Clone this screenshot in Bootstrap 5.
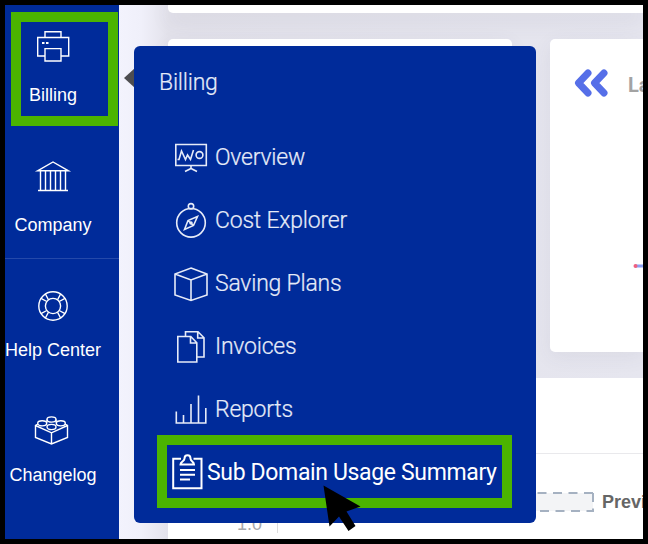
<!DOCTYPE html>
<html lang="en">
<head>
<meta charset="utf-8">
<meta name="viewport" content="width=device-width, initial-scale=1">
<title>Billing</title>
<link href="https://cdn.jsdelivr.net/npm/bootstrap@5.3.0/dist/css/bootstrap.min.css" rel="stylesheet">
<style>
body{margin:0;background:#000;overflow:hidden}
.shell{width:648px;height:544px;border:5px solid #000;background:#f1f1fb}
svg{display:block;flex:none;fill:none;stroke:#fff;stroke-width:1.4;overflow:visible}
.side{width:114px;background:#002b9a;flex:none;font:18px/27px "Liberation Sans",Arial,sans-serif;color:#fff}
.side-item{width:96px;height:130px;padding-top:25px;white-space:nowrap}
.side-item svg{margin-bottom:18px}
.side-low{height:125px;padding-top:0}
.side-low svg{margin-bottom:14px}
.side-rule{height:1px;margin-bottom:30px;background:#2449aa;margin-top:-7px}
.page{min-width:0;padding-left:49px;background:linear-gradient(90deg,#f3f3fd 0,#f0f0fa 22px,#e3e2eb 49px,#e6e6ef 100%)}
.panel{background:#fff;flex:none}
.panel-top{height:8px;border-bottom-left-radius:5px;margin-bottom:26px;box-shadow:0 6px 22px rgba(70,70,95,.14)}
.panel-left{width:344px;height:313px;border-radius:5px;box-shadow:0 5px 20px rgba(70,70,95,.07)}
.panel-right{width:93px;height:313px;border-radius:5px 0 0 5px;padding:27px 0 0 23px;box-shadow:0 5px 20px rgba(70,70,95,.07)}
.metric{font:bold 20px/24px Roboto,sans-serif;color:#a3a3a3;margin:3px 0 0 18px}
.trend{margin:153px 0 0 60px}
.panel-bottom{margin-top:26px;height:161px}
.panel-head{height:76px;border-bottom:1px solid #e9e9ec}
.legend-row{padding:38px 0 0 365px;font:bold 18px/20px "Liberation Sans",Arial,sans-serif;color:#666}
.axis-row{padding-left:69px;margin-top:2px;font:18px/20px "Liberation Sans",Arial,sans-serif;color:#a7a8ac}
.axis-line{width:1px;height:18px;background:#ddd;margin-left:15px}
.flyout{left:134px;top:46px;width:402px;height:477px;border-radius:6px;background:#002b9a;color:#e6ebf8;font:300 23px/30px Roboto,sans-serif;letter-spacing:-.22px;-webkit-text-stroke:.2px currentColor}
.flyout-title{padding:22px 0 0 25px;height:80px}
.entry{height:63px;padding-left:40px;white-space:nowrap}
.entry svg{margin-right:7px;stroke:#e6ebf8;stroke-width:1.6}
.entry-on{height:73px;width:355px;margin:-6px 0 0 23px;border:10px solid #4bb400;padding:2px 0 0 4px;color:#fff;font-weight:400;letter-spacing:-.35px;-webkit-text-stroke:0}
.entry-on svg{margin-right:2px;stroke:#fff;stroke-width:2}
.pointer{left:124px;top:68px;stroke:none;fill:#4d4d50}
.ring{left:11px;top:12px;width:107px;height:114px;border:10px solid #4bb400}
.cursor{left:320px;top:482px;stroke:none;fill:#000}
</style>
<script src="https://cdn.jsdelivr.net/npm/bootstrap@5.3.0/dist/js/bootstrap.bundle.min.js"></script>
</head>
<body>
<div class="shell d-flex overflow-hidden position-relative">
  <nav class="side d-flex flex-column">
    <div class="side-item d-flex flex-column align-items-center">
      <svg width="34" height="34" viewBox="0 0 34 34"><path d="M9 7.500V1.700h16V7.500M9 26H1.700V7.500h31V26H25M9 18.600h16V31H9z"/><path d="M6 13h2.500M10 13h2.500" stroke-width="2"/></svg>
      <span>Billing</span>
    </div>
    <div class="side-item d-flex flex-column align-items-center">
      <svg width="34" height="34" viewBox="0 0 34 34"><path d="M1.500 10.800 17 2l15.500 8.800zM2 30.500h30M4.500 11v19M9.500 11v19M14.500 11v19M19.500 11v19M24.500 11v19M29.500 11v19"/></svg>
      <span>Company</span>
    </div>
    <div class="side-rule"></div>
    <div class="side-item side-low d-flex flex-column align-items-center">
      <svg width="34" height="34" viewBox="0 0 34 34"><circle cx="17" cy="17" r="14.200"/><circle cx="17" cy="17" r="7.600"/><path d="M12.500 10.800 9.400 5M10.800 12.500 5 9.400M21.500 10.800 24.600 5M23.200 12.500 29 9.400M12.500 23.200 9.400 29M10.800 21.500 5 24.600M21.500 23.200 24.600 29M23.200 21.500 29 24.600"/></svg>
      <span>Help Center</span>
    </div>
    <div class="side-item side-low d-flex flex-column align-items-center">
      <svg width="34" height="34" viewBox="0 0 34 34"><ellipse cx="15.500" cy="5.500" rx="4.500" ry="2.600"/><ellipse cx="6.200" cy="9.300" rx="4.500" ry="2.600"/><ellipse cx="24.800" cy="9.300" rx="4.500" ry="2.600"/><ellipse cx="15.500" cy="13" rx="4.500" ry="2.600"/><path d="M2 10-.500 11.500V23.500L15.500 30l16-6.500v-12L29 10M-.500 11.500l16 7.300 16-7.300M15.500 18.800V30M11 5.500v3M20 5.500v3"/></svg>
      <span>Changelog</span>
    </div>
  </nav>
  <main class="page flex-fill overflow-hidden">
    <div class="panel panel-top"></div>
    <div class="d-flex justify-content-between">
      <section class="panel panel-left"></section>
      <section class="panel panel-right overflow-hidden">
        <div class="d-flex align-items-center">
          <svg width="37" height="34" viewBox="0 0 37 34" style="stroke:#566fe8;stroke-width:7"><path d="M15 7 5.500 17l9.500 10M31 7l-9.500 10L31 27" stroke-linecap="round" stroke-linejoin="round"/></svg>
          <span class="metric text-nowrap">La</span>
        </div>
        <svg class="trend" width="40" height="20" viewBox="0 0 40 20"><path d="M2 13h38" stroke="#8aa0f4" stroke-width="3"/><circle cx="2.500" cy="13" r="2" fill="#f06080" stroke="none"/></svg>
      </section>
    </div>
    <section class="panel panel-bottom">
      <div class="panel-head"></div>
      <div class="legend-row d-flex align-items-center text-nowrap">
        <svg width="61" height="20" viewBox="0 0 61 20"><path d="M1 1h59v18H1z" fill="#f3f4f6" stroke="none"/><path d="M60 1H0M60 1v18H0" stroke="#a5b1c1" stroke-width="2" stroke-dasharray="9 6.500"/></svg>
        <span class="ms-2">Previ</span>
      </div>
      <div class="axis-row d-flex align-items-center"><span>1.0</span><div class="axis-line"></div></div>
    </section>
  </main>
</div>
<svg class="pointer position-absolute" width="12" height="20" viewBox="0 0 12 20"><path d="M0 10 11 0v20z"/></svg>
<aside class="flyout position-absolute">
  <div class="flyout-title">Billing</div>
  <div class="entry d-flex align-items-center">
    <svg width="34" height="34" viewBox="0 0 34 34"><path d="M1.800 3.500h30.500v21H1.800zM17 24.500v3M11 30.500l6-3 6 3"/><path d="M3.500 18.500H5l2.500-8.500 4 8.500 2-4.500 3 4.500L19.500 9"/><circle cx="25.500" cy="14" r="3.400"/></svg>
    <span>Overview</span>
  </div>
  <div class="entry d-flex align-items-center">
    <svg width="34" height="34" viewBox="0 0 34 34"><circle cx="17" cy="18.800" r="14.300"/><circle cx="17" cy="2.300" r="2.700"/><path d="M23.500 12.500 14 16.500l-3.500 9 9-4zM14 16.500l5.500 5"/><circle cx="17" cy="19" r="1"/></svg>
    <span>Cost Explorer</span>
  </div>
  <div class="entry d-flex align-items-center">
    <svg width="34" height="34" viewBox="0 0 34 34"><path d="M17 1l16 6v21l-16 5.500L1 28V7zM1 7l16 6 16-6M17 13v20"/></svg>
    <span>Saving Plans</span>
  </div>
  <div class="entry d-flex align-items-center">
    <svg width="34" height="34" viewBox="0 0 34 34"><path d="M3.800 6.500h13l6 6.200V32h-19zM16.500 6.500V13h6.300M11.500 6.500V1.800H24l6 6V27h-7M23.700 1.800V8H30"/></svg>
    <span>Invoices</span>
  </div>
  <div class="entry d-flex align-items-center">
    <svg width="34" height="34" viewBox="0 0 34 34"><path d="M2.300 18.500V30h29.500V15M9.500 22v8M17 11v19M24.500 2.500V30"/></svg>
    <span>Reports</span>
  </div>
  <div class="entry entry-on d-flex align-items-center">
    <svg width="34" height="36" viewBox="0 0 34 36"><path d="M10 3.800H2.200v29.500h28.300V3.800H22.500M9.500 9.500h13.500c0-3-3.500-3-3.500-6 0-4.500-6-4.500-6 0 0 3-4 3-4 6zM9 15h15M9 19.800h15M9 24.500h10"/></svg>
    <span>Sub Domain Usage Summary</span>
  </div>
</aside>
<div class="ring position-absolute"></div>
<svg class="cursor position-absolute" width="46" height="54" viewBox="0 0 46 54"><path d="M3.500 3.500 40.500 24.500 26.500 29.500 35.500 44 28.500 49 19 34.500 9.500 44.500z"/></svg>
</body>
</html>
